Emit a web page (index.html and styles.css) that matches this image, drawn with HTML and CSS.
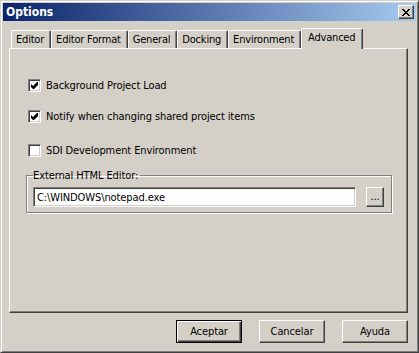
FILE: index.html
```html
<!DOCTYPE html>
<html lang="es">
<head>
  <meta charset="UTF-8" />
  <meta name="viewport" content="width=device-width, initial-scale=1.0" />
  <title>Options</title>
  <link rel="stylesheet" href="styles.css">
</head>
<body>
  <div class="ventana">
    <div class="titulo">
      <span>Options</span>
      <button type="button" class="cerrar" aria-label="Cerrar">
        <svg width="8" height="7" viewBox="0 0 8 7"><path d="M0 0h2v1h-2z M6 0h2v1h-2z M1 1h2v1h-2z M5 1h2v1h-2z M2 2h4v1h-4z M3 3h2v1h-2z M2 4h4v1h-4z M1 5h2v1h-2z M5 5h2v1h-2z M0 6h2v1h-2z M6 6h2v1h-2z" fill="#000"/></svg>
      </button>
    </div>

    <div class="contenido">
      <div class="pestanas">
        <div class="pestana">Editor</div>
        <div class="pestana">Editor Format</div>
        <div class="pestana">General</div>
        <div class="pestana">Docking</div>
        <div class="pestana">Environment</div>
        <div class="pestana activa">Advanced</div>
      </div>

      <div class="panel">
        <label class="opcion primera">
          <span class="casilla"><svg width="7" height="7" viewBox="0 0 7 7"><path d="M6 0h1v3l-4 4h-1l-2-2v-3l2 2z" fill="#000"/></svg></span>
          Background Project Load
        </label>
        <label class="opcion segunda">
          <span class="casilla"><svg width="7" height="7" viewBox="0 0 7 7"><path d="M6 0h1v3l-4 4h-1l-2-2v-3l2 2z" fill="#000"/></svg></span>
          Notify when changing shared project items
        </label>
        <label class="opcion tercera">
          <span class="casilla"></span>
          SDI Development Environment
        </label>

        <fieldset class="grupo">
          <legend>External HTML Editor:</legend>
          <div class="fila">
            <input type="text" class="campo" value="C:\WINDOWS\notepad.exe" readonly />
            <button type="button" class="examinar">...</button>
          </div>
        </fieldset>
      </div>

      <div class="botones">
        <button type="button" class="boton defecto">Aceptar</button>
        <button type="button" class="boton">Cancelar</button>
        <button type="button" class="boton">Ayuda</button>
      </div>
    </div>
  </div>
</body>
</html>
```

FILE: styles.css
```css
body {
  margin: 0;
  background-color: #d4d0c8;
  font-family: "DejaVu Sans Condensed", "Liberation Sans", sans-serif;
  font-size: 11px;
  letter-spacing: -0.1px;
  color: #000;
}

.ventana {
  width: 419px;
  height: 353px;
  box-sizing: border-box;
  border: 1px solid;
  border-color: #d4d0c8 #404040 #404040 #d4d0c8;
  box-shadow: inset 1px 1px #fff, inset -1px -1px #808080;
  padding: 2px;
  display: flex;
  flex-direction: column;
}

.titulo {
  height: 18px;
  flex: none;
  display: flex;
  align-items: center;
  justify-content: space-between;
  padding: 0 2px 0 3px;
  background: linear-gradient(90deg, #0a246a, #a6caf0);
  color: #fff;
  font-weight: bold;
  font-size: 12px;
  letter-spacing: 0;
}

.cerrar {
  width: 16px;
  height: 14px;
  box-sizing: border-box;
  padding: 0;
  border: 1px solid;
  border-color: #fff #404040 #404040 #fff;
  box-shadow: inset -1px -1px #808080;
  background-color: #d4d0c8;
  display: flex;
  align-items: center;
  justify-content: center;
}

.contenido {
  flex: 1;
  display: flex;
  flex-direction: column;
  padding: 7px 8px 0 6px;
}

.pestanas {
  display: flex;
  align-items: flex-end;
  height: 20px;
  padding-left: 2px;
}

.pestana {
  height: 18px;
  box-sizing: border-box;
  padding: 0 6px 0 4px;
  border-top: 1px solid #fff;
  border-left: 1px solid #fff;
  border-right: 1px solid #404040;
  box-shadow: inset -1px 0 #808080;
  border-radius: 2px 2px 0 0;
  line-height: 17px;
  letter-spacing: -0.2px;
  white-space: nowrap;
}

.pestana.activa {
  height: 21px;
  margin-bottom: -1px;
  padding: 0 7px 0 6px;
  line-height: 17px;
  background-color: #d4d0c8;
  position: relative;
  z-index: 1;
}

.panel {
  height: 265px;
  flex: none;
  box-sizing: border-box;
  border: 1px solid;
  border-color: #fff #404040 #404040 #fff;
  box-shadow: inset -1px -1px #808080;
  padding: 0 15px 0 16px;
}

.opcion {
  display: flex;
  align-items: center;
  gap: 5px;
  height: 13px;
  margin-left: 2px;
  white-space: nowrap;
}

.primera { margin-top: 30px; }
.segunda { margin-top: 18px; }
.tercera { margin-top: 21px; }

.casilla {
  width: 13px;
  height: 13px;
  flex: none;
  box-sizing: border-box;
  border: 1px solid;
  border-color: #808080 #fff #fff #808080;
  box-shadow: inset 1px 1px #404040, inset -1px -1px #d4d0c8;
  background-color: #fff;
  display: flex;
  align-items: center;
  justify-content: center;
}

.grupo {
  margin: 12px 0 0 0;
  min-width: 0;
  border: 1px solid #808080;
  box-shadow: 1px 1px #fff, inset 1px 1px #fff;
  padding: 5px 7px 5px 6px;
}

.grupo legend {
  padding: 0 2px 0 0;
  line-height: 13px;
}

.fila {
  display: flex;
  gap: 10px;
}

.campo {
  flex: 1;
  min-width: 0;
  height: 20px;
  box-sizing: border-box;
  margin: 0;
  border: 1px solid;
  border-color: #808080 #fff #fff #808080;
  box-shadow: inset 1px 1px #404040, inset -1px -1px #d4d0c8;
  background-color: #fff;
  padding: 0 3px;
  font: inherit;
  letter-spacing: inherit;
  color: #000;
  outline: none;
}

.examinar,
.boton {
  box-sizing: border-box;
  margin: 0;
  padding: 0;
  border: 1px solid;
  border-color: #fff #404040 #404040 #fff;
  box-shadow: inset -1px -1px #808080;
  background-color: #d4d0c8;
  font: inherit;
  letter-spacing: inherit;
  color: #000;
}

.examinar {
  width: 18px;
  height: 20px;
  line-height: 18px;
}

.botones {
  display: flex;
  justify-content: flex-end;
  gap: 17px;
  margin-top: 7px;
}

.boton {
  width: 66px;
  height: 23px;
}

.boton.defecto {
  border: 1px solid #000;
  box-shadow: inset 1px 1px #fff, inset -1px -1px #404040, inset -2px -2px #808080;
}
```
